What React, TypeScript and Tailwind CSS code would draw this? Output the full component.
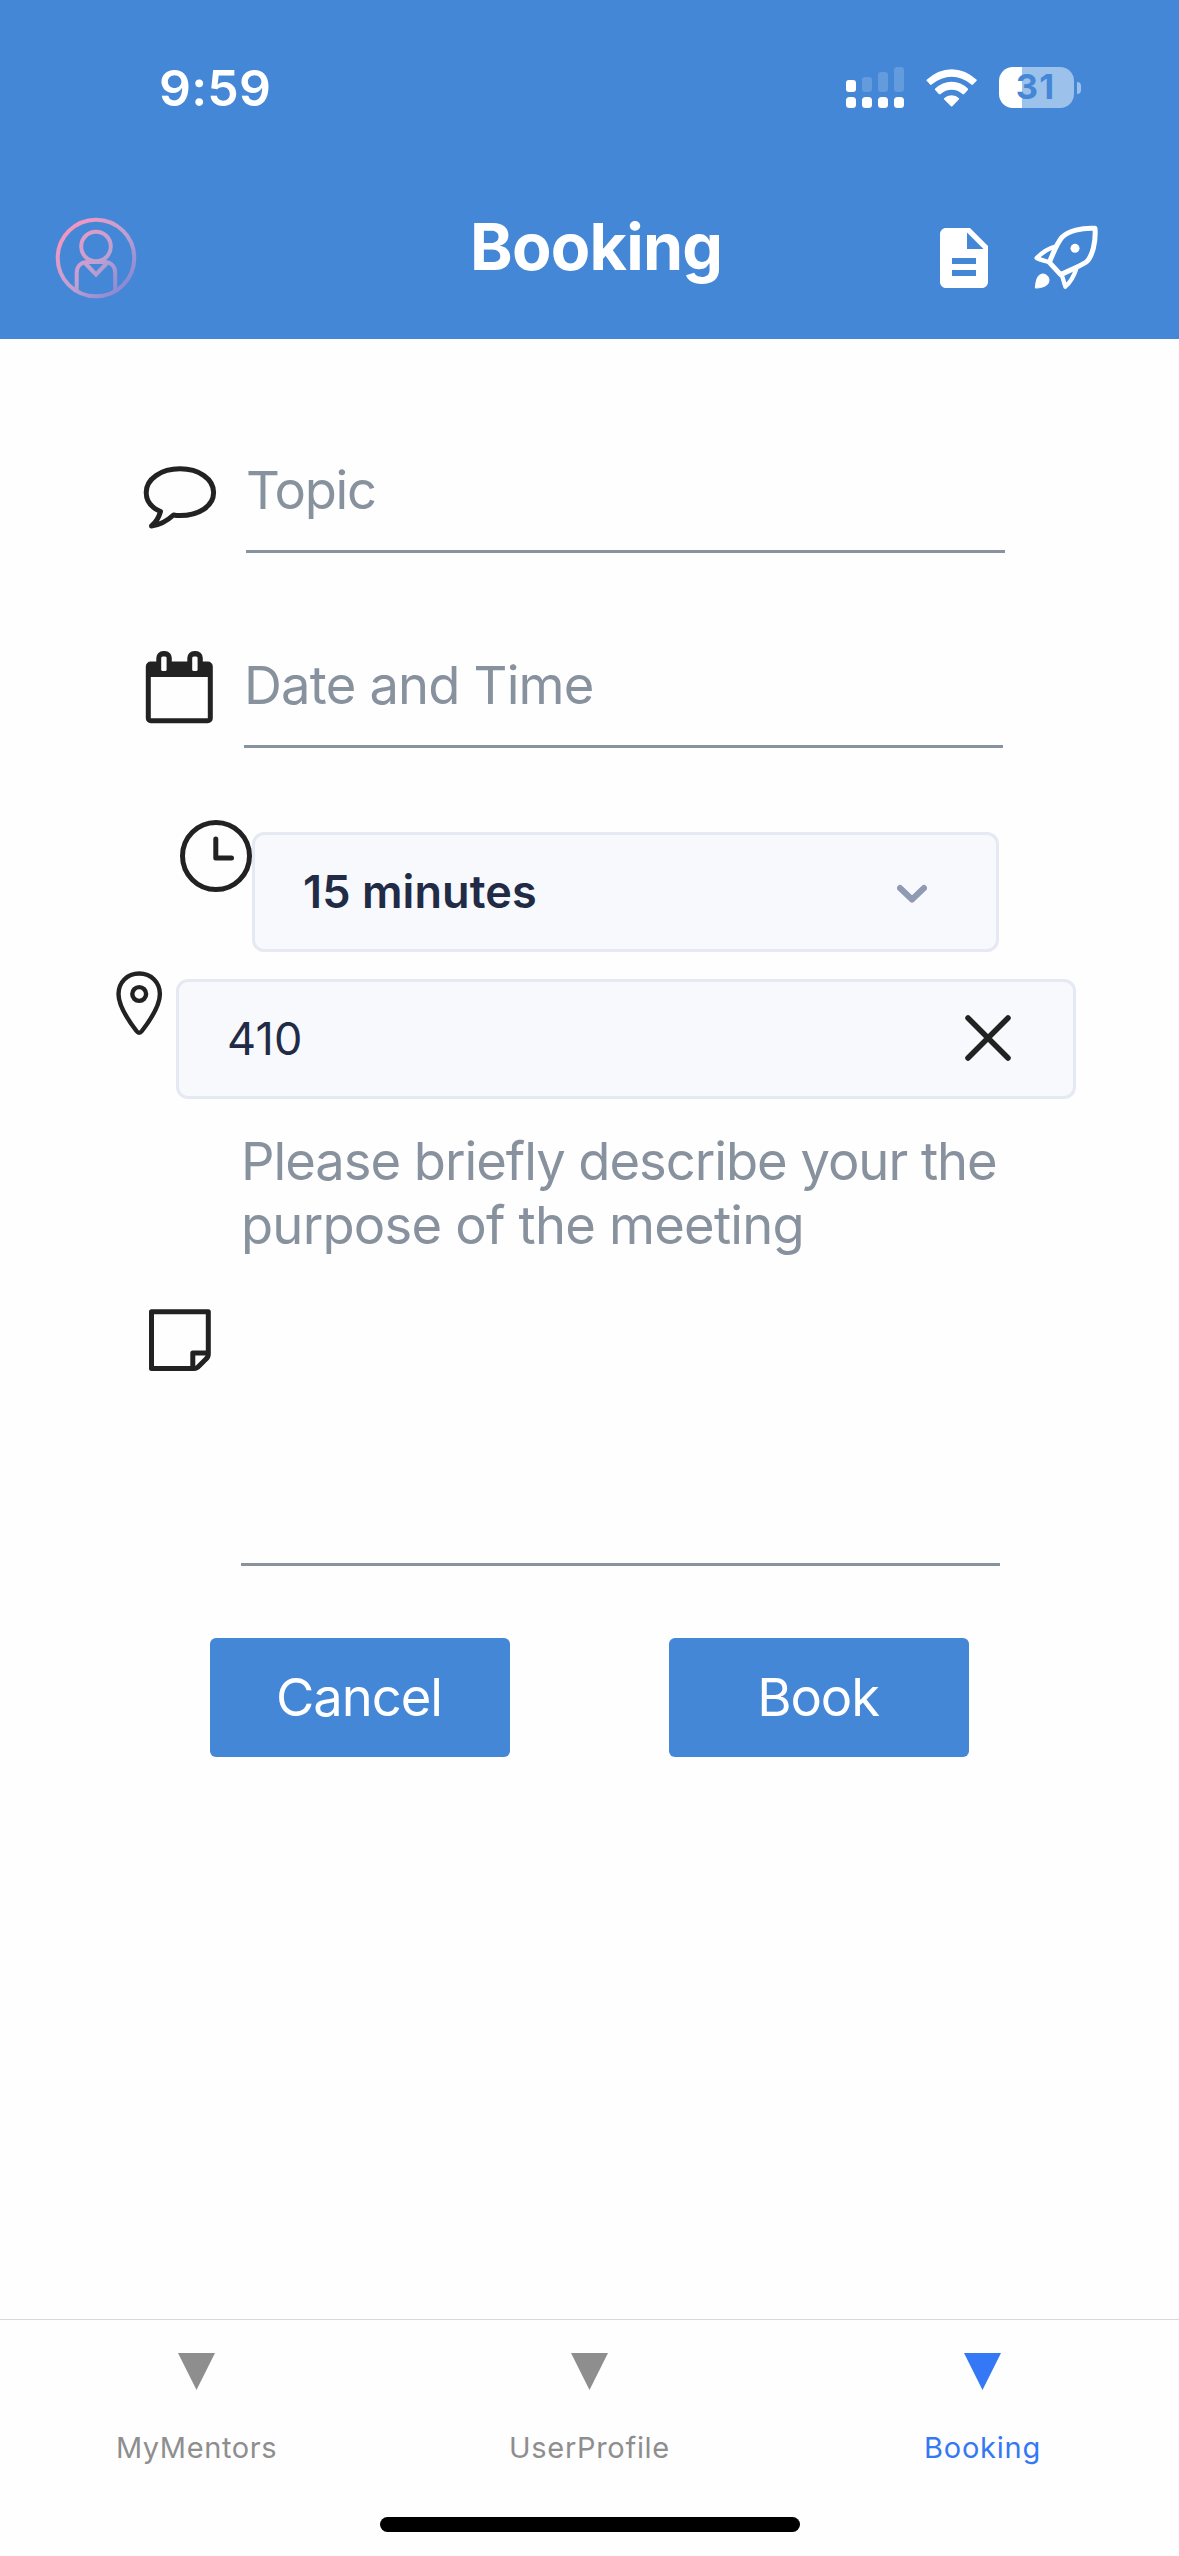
import type { ReactNode } from 'react';
import { MdDescription } from 'react-icons/md';

function SignalIcon() {
  return (
    <svg width="58" height="41" viewBox="0 0 58 41" fill="white">
      <rect x="0" y="13" width="10" height="12" rx="3" />
      <rect x="16" y="10" width="10" height="15" rx="3" opacity="0.17" />
      <rect x="32" y="5" width="10" height="20" rx="3" opacity="0.17" />
      <rect x="48" y="0" width="10" height="25" rx="3" opacity="0.17" />
      <rect x="0" y="30" width="10" height="11" rx="3.5" />
      <rect x="16" y="30" width="10" height="11" rx="3.5" />
      <rect x="32" y="30" width="10" height="11" rx="3.5" />
      <rect x="48" y="30" width="10" height="11" rx="3.5" />
    </svg>
  );
}

function WifiIcon() {
  return (
    <svg width="51" height="38" viewBox="438 86 153 113" fill="white">
      <path d="M440 118 Q474 86 515 86 Q556 86 590 118 Q591 120 590 121 L578 133 Q576 134 574 132 Q546 109 515 109 Q484 109 455 132 Q453 134 451 133 L440 121 Q438 119 440 118 Z" />
      <path d="M465 145 Q487 124 515 124 Q543 124 564 145 Q565 147 564 148 L552 161 Q550 162 548 161 Q533 148 515 148 Q497 148 481 161 Q479 162 477 161 L465 148 Q464 147 465 145 Z" />
      <path d="M492 173 Q502 164 515 164 Q528 164 537 173 Q538 175 537 176 L517 197 Q515 199 513 197 L492 176 Q491 174 492 173 Z" />
    </svg>
  );
}

function Battery() {
  return (
    <div className="flex items-center gap-[3px]">
      <div className="flex h-[41px] w-[75px] items-center justify-center rounded-[14px] bg-[linear-gradient(to_right,white_23px,#9cc1ea_23px)] pr-[2px] text-[34.5px] leading-none font-bold tracking-[1.2px] text-[#4487d6]">
        <span>31</span>
      </div>
      <div className="h-[12px] w-[4px] rounded-r-full bg-[#9cc1ea]" />
    </div>
  );
}

function AvatarIcon() {
  return (
    <svg width="82" height="82" viewBox="55 217 82 82" fill="none" stroke="url(#avatarStroke)" strokeWidth="4">
      <defs>
        <linearGradient id="avatarStroke" gradientUnits="userSpaceOnUse" x1="66" y1="228" x2="126" y2="288">
          <stop offset="0" stopColor="#fb93bd" />
          <stop offset="0.15" stopColor="#e69ac5" />
          <stop offset="0.55" stopColor="#bfa0d2" />
          <stop offset="1" stopColor="#8788d4" />
        </linearGradient>
      </defs>
      <circle cx="96" cy="258" r="38.3" />
      <circle cx="96" cy="246.5" r="14.8" />
      <path d="M76.7 290 V273 C76.7 266 81 262 88 262 H104 C111 262 115.2 266 115.2 273 V290" />
      <path d="M84.5 262.5 L96 274.5 L107.5 262.5" />
    </svg>
  );
}

function RocketIcon() {
  return (
    <svg width="73" height="73" viewBox="750 545 219 219" fill="none" stroke="white" strokeWidth="15" strokeLinejoin="round">
      <path d="M945 567 C905 565 865 574 846 594 C832 609 822 636 808 669 L842 706 C876 690 904 678 919 668 C938 651 948 606 945 567 Z" />
      <path d="M828 621 C808 626 785 641 770 656 C780 661 791 664 806 668" strokeWidth="13" />
      <path d="M845 707 C850 719 852 730 856 742 C871 729 882 710 889 688" strokeWidth="13" />
      <circle cx="885" cy="627" r="13.5" fill="white" stroke="none" />
      <path d="M766 746 C767 732 769 722 773 714 C778 705 786 704 790 704 C800 705 807 713 807 722 C807 731 802 737 795 740 C787 744 777 746 766 746 Z" fill="white" stroke="white" strokeWidth="3" />
    </svg>
  );
}

function SpeechIcon() {
  return (
    <svg className="mt-2 shrink-0" width="80" height="72" viewBox="140 460 80 72" fill="none" stroke="#222" strokeWidth="5" strokeLinejoin="round">
      <path d="M160.5 511.5 C151 507.5 146.2 501 146.2 492.5 C146.2 479 161 468.8 180 468.8 C199 468.8 213.6 479 213.6 492.5 C213.6 506 199 515.6 180 515.6 C177.500 515.6 175.5 515.4 173.5 515 C167 521 160 525 151.5 526 C156.5 522 158.8 517.5 160.5 511.500 Z" />
    </svg>
  );
}

function CalendarIcon() {
  return (
    <svg className="shrink-0" width="80" height="80" viewBox="140 647 80 80">
      <rect x="156.3" y="651" width="15.5" height="24" rx="7" fill="#222" />
      <rect x="187.3" y="651" width="15.5" height="24" rx="7" fill="#222" />
      <rect x="148.3" y="664" width="62" height="56.8" rx="2.5" fill="none" stroke="#222" strokeWidth="5" />
      <rect x="148" y="663" width="62" height="14" fill="#222" />
      <rect x="161.2" y="656.5" width="5.4" height="14.5" rx="1.5" fill="#fefefe" />
      <rect x="192.2" y="656.5" width="5.4" height="14.5" rx="1.5" fill="#fefefe" />
    </svg>
  );
}

function ClockIcon() {
  return (
    <svg className="shrink-0" width="76" height="80" viewBox="176 816 76 80" fill="none" stroke="#222" strokeWidth="5" strokeLinecap="round" strokeLinejoin="round">
      <circle cx="216" cy="856" r="33.5" />
      <path d="M215.8 839 V858 H231.5" />
    </svg>
  );
}

function PinIcon() {
  return (
    <svg className="shrink-0" width="56" height="72" viewBox="110 967 56 72" fill="none" stroke="#222" strokeWidth="4.4" strokeLinejoin="round">
      <path d="M139.2 973.5 C127 973.5 118.5 982.5 118.5 994 C118.5 1006 128 1020 136.5 1031 Q139.2 1034.5 141.9 1031 C150.4 1020 159.9 1006 159.9 994 C159.9 982.5 151.4 973.5 139.2 973.5 Z" />
      <circle cx="139.2" cy="994" r="6.9" />
    </svg>
  );
}

function NoteIcon() {
  return (
    <svg className="mt-44 shrink-0" width="70" height="70" viewBox="145 1305 70 70" fill="none" stroke="#222" strokeWidth="5" strokeLinejoin="round">
      <path d="M151.5 1311.8 H208.3 V1354 Q208.3 1357 206 1359 L199 1366 Q197 1368.5 194 1368.5 H151.5 Z" />
      <path d="M208 1353 H192.8 V1368" />
    </svg>
  );
}

function Field({ className, children }: { className: string; children: ReactNode }) {
  return (
    <div className={`w-[759px] shrink-0 border-b-[3px] border-[#89939f] text-[52.5px] whitespace-nowrap text-[#87929e] ${className}`}>
      {children}
    </div>
  );
}

function Box({ className, children }: { className: string; children: ReactNode }) {
  return (
    <div className={`flex h-[120px] shrink-0 items-center justify-between rounded-[12px] border-[3px] border-[#e4e9f2] bg-[#f7f9fd] pl-12 text-[45px] leading-[60px] text-[#222b45] ${className}`}>
      {children}
    </div>
  );
}

const tabs = [
  { label: 'MyMentors', style: 'text-[#8e8e8f] tracking-[0.6px]' },
  { label: 'UserProfile', style: 'text-[#8e8e8f] tracking-[0.7px]' },
  { label: 'Booking', style: 'text-[#3478f6] tracking-[0.75px]' },
];

export default function App() {
  return (
    <div className="flex h-[2556px] w-[1179px] flex-col overflow-hidden bg-[#fefefe] font-['Inter',sans-serif]">
      <header className="h-[339px] bg-[#4487d6] text-white">
        <div className="flex h-[176px] items-center justify-between pr-[98px] pl-[159px]">
          <span className="text-[50px] leading-none font-semibold tracking-[0.2px]">9:59</span>
          <div className="mb-px flex items-center">
            <SignalIcon />
            <div className="mr-[22px] ml-[22px]">
              <WifiIcon />
            </div>
            <Battery />
          </div>
        </div>
        <div className="flex h-[163px] items-center pl-[55px]">
          <AvatarIcon />
          <h1 className="mb-[20px] ml-[333px] w-[255px] text-[64.5px] leading-none font-bold tracking-[-0.75px]">Booking</h1>
          <MdDescription className="ml-[203px]" size={72} />
          <div className="ml-[30px]">
            <RocketIcon />
          </div>
        </div>
      </header>

      <main className="pt-[113px]">
        <div className="flex pl-[140px]">
          <SpeechIcon />
          <Field className="ml-[26px] h-[101px] leading-[76px] tracking-[-1.28px]">Topic</Field>
        </div>
        <div className="mt-[94px] flex pl-[140px]">
          <CalendarIcon />
          <Field className="ml-6 h-[101px] leading-[76px] tracking-[-0.8px]">Date and Time</Field>
        </div>
        <div className="mt-[68px] flex pl-[176px]">
          <ClockIcon />
          <Box className="mt-4 w-[747px] pr-[69px]">
            <span className="mb-px font-semibold tracking-[0.1px]">15 minutes</span>
            <svg className="mt-[3px]" width="30" height="20" viewBox="0 0 30 20" fill="none" stroke="#8f9bb3" strokeWidth="6" strokeLinecap="round" strokeLinejoin="round">
              <path d="M3 4 L15 15.5 L27 4" />
            </svg>
          </Box>
        </div>
        <div className="mt-[15px] flex pl-[110px]">
          <PinIcon />
          <Box className="mt-3 ml-[10px] w-[900px] pr-[62px]">
            <span className="tracking-[0.25px]">410</span>
            <svg className="mb-[2px]" width="46" height="46" viewBox="0 0 46 46" fill="none" stroke="#222" strokeWidth="5.5" strokeLinecap="round">
              <path d="M3 3 L43 43 M43 3 L3 43" />
            </svg>
          </Box>
        </div>
        <div className="mt-[30px] flex pl-[145px]">
          <NoteIcon />
          <Field className="ml-[26px] h-[437px] leading-[64px]">
            <div className="tracking-[-1.02px]">Please briefly describe your the</div>
            <div className="tracking-[-0.78px]">purpose of the meeting</div>
          </Field>
        </div>
        <div className="mt-[72px] flex gap-[159px] pl-[210px] text-[52.5px] text-white">
          <button className="h-[119px] w-[300px] rounded-[6px] bg-[#4487d6] pr-[2px] tracking-[-0.99px]">Cancel</button>
          <button className="h-[119px] w-[300px] rounded-[6px] bg-[#4487d6] pr-[2px] tracking-[-1.1px]">Book</button>
        </div>
      </main>

      <footer className="mt-auto h-[237px] border-t border-[#d8d8d8]">
        <nav className="grid grid-cols-3 pt-[33px]">
          {tabs.map((tab) => (
            <div key={tab.label} className={`flex flex-col items-center ${tab.style}`}>
              <svg width="37" height="37" viewBox="0 0 37 37" fill="currentColor">
                <path d="M0 0 H37 L18.5 37 Z" />
              </svg>
              <span className="mt-[38px] text-[29px] leading-[40px]">{tab.label}</span>
            </div>
          ))}
        </nav>
        <div className="mx-auto mt-[49px] h-[15px] w-[420px] rounded-full bg-black" />
      </footer>
    </div>
  );
}
